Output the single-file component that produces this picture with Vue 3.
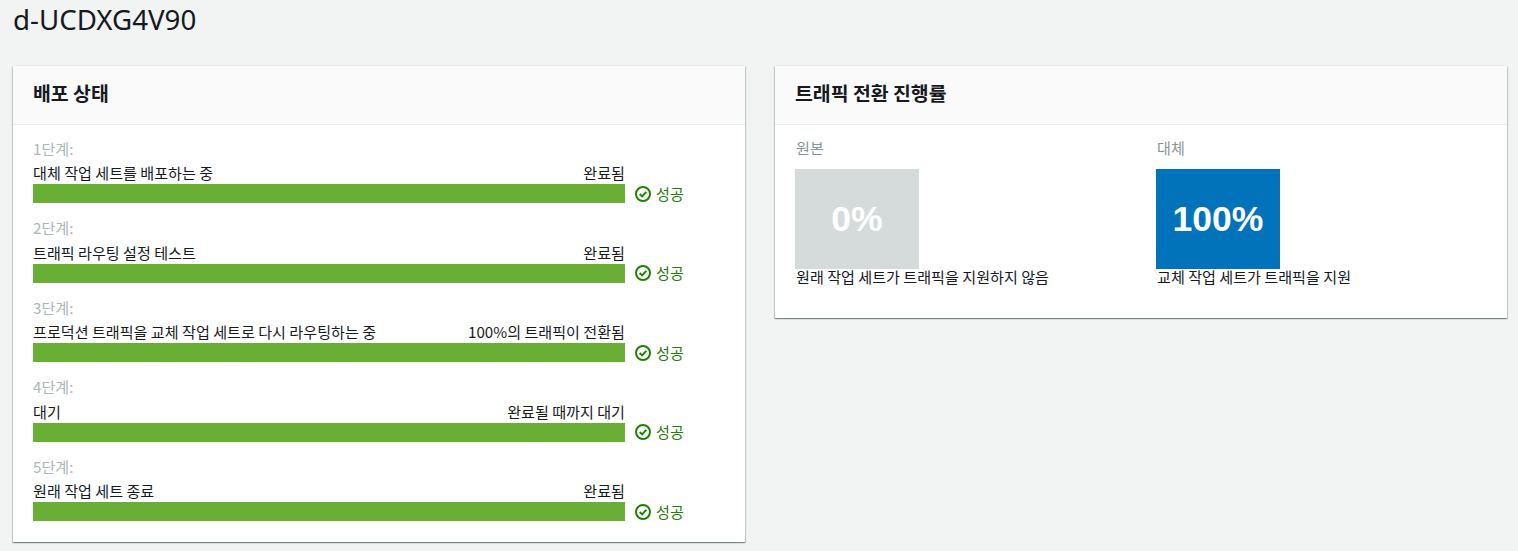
<template>
  <div class="page">
    <h1 class="title">d-UCDXG4V90</h1>

    <div class="columns">
      <section class="card">
        <header class="card-header">
          <h2>배포 상태</h2>
        </header>
        <div class="card-body steps">
          <div v-for="step in steps" :key="step.label" class="step">
            <div class="step-label">{{ step.label }}</div>
            <div class="step-main">
              <div class="step-progress">
                <div class="step-text">
                  <span>{{ step.name }}</span>
                  <span>{{ step.state }}</span>
                </div>
                <div class="bar"></div>
              </div>
              <div class="status">
                <svg width="16" height="16" viewBox="0 0 16 16" fill="none" stroke="#1d8102">
                  <circle cx="8" cy="8" r="7" stroke-width="2" />
                  <path d="M4.7 8l2.4 2.4 4.2-4.6" stroke-width="2" />
                </svg>
                <span class="status-text">성공</span>
              </div>
            </div>
          </div>
        </div>
      </section>

      <section class="card card-short">
        <header class="card-header">
          <h2>트래픽 전환 진행률</h2>
        </header>
        <div class="card-body traffic">
          <div v-for="t in traffic" :key="t.label" class="traffic-col">
            <div class="traffic-label">{{ t.label }}</div>
            <div class="traffic-box" :class="t.kind">{{ t.percent }}</div>
            <div class="traffic-desc">{{ t.desc }}</div>
          </div>
        </div>
      </section>
    </div>
  </div>
</template>

<script setup>
const steps = [
  { label: '1단계:', name: '대체 작업 세트를 배포하는 중', state: '완료됨' },
  { label: '2단계:', name: '트래픽 라우팅 설정 테스트', state: '완료됨' },
  { label: '3단계:', name: '프로덕션 트래픽을 교체 작업 세트로 다시 라우팅하는 중', state: '100%의 트래픽이 전환됨' },
  { label: '4단계:', name: '대기', state: '완료될 때까지 대기' },
  { label: '5단계:', name: '원래 작업 세트 종료', state: '완료됨' }
]

const traffic = [
  { label: '원본', percent: '0%', kind: 'original', desc: '원래 작업 세트가 트래픽을 지원하지 않음' },
  { label: '대체', percent: '100%', kind: 'replacement', desc: '교체 작업 세트가 트래픽을 지원' }
]
</script>

<style>
html,
body {
  background: #f2f3f3;
}
</style>

<style scoped>
.page {
  height: 551px;
  box-sizing: border-box;
  overflow: hidden;
  padding: 0 11px 0 13px;
  font-family: "Noto Sans CJK KR", "Noto Sans", sans-serif;
  font-size: 15.1px;
  line-height: 20px;
  color: #16191f;
}
.title {
  margin: 0;
  height: 66px;
  padding-top: 1px;
  box-sizing: border-box;
  font-family: "Noto Sans", "Noto Sans CJK KR", sans-serif;
  font-size: 27.7px;
  line-height: 36px;
  font-weight: 400;
}
.columns {
  display: grid;
  grid-template-columns: 732px 732px;
  gap: 30px;
  align-items: start;
}
.card {
  background: #fff;
  box-shadow: 0 1px 1px 0 rgba(0, 28, 36, 0.3), 1px 1px 1px 0 rgba(0, 28, 36, 0.15), -1px 1px 1px 0 rgba(0, 28, 36, 0.15), 0 -1px 0 0 #e9ebeb;
}
.card-header {
  height: 59px;
  box-sizing: border-box;
  padding: 16px 20px;
  background: #fafafa;
  border-bottom: 1px solid #eaeded;
}
.card-header h2 {
  margin: 0;
  font-size: 19.4px;
  line-height: 22px;
  font-weight: 700;
}
.steps {
  height: 417px;
  box-sizing: border-box;
  padding: 13.75px 20px 0;
}
.step {
  height: 79.5px;
}
.step-label {
  color: #aab7b8;
  height: 20px;
  line-height: 18px;
  margin-bottom: 5.5px;
}
.step-main {
  display: flex;
}
.step-progress {
  width: 592px;
}
.step-text {
  display: flex;
  justify-content: space-between;
  height: 20px;
  line-height: 16px;
}
.bar {
  height: 19px;
  background: #6aaf35;
}
.status {
  display: flex;
  align-items: center;
  gap: 5px;
  margin: 20px 0 0 10px;
  height: 19px;
  color: #1d8102;
}
.status-text {
  margin-bottom: 2px;
}
.traffic {
  height: 193px;
  box-sizing: border-box;
  padding: 13px 20px 0;
  display: grid;
  grid-template-columns: 361px 1fr;
}
.traffic-label {
  color: #879596;
  height: 20px;
  line-height: 18px;
  margin-bottom: 11px;
  padding-left: 1px;
}
.traffic-box {
  width: 124px;
  height: 100px;
  display: flex;
  align-items: center;
  justify-content: center;
  color: #fff;
  font-family: "Liberation Sans", Arial, sans-serif;
  font-size: 35.5px;
  font-weight: 700;
}
.original {
  background: #d5dbdb;
}
.replacement {
  background: #0073bb;
}
.traffic-desc {
  padding-left: 1px;
  line-height: 15px;
}
</style>
